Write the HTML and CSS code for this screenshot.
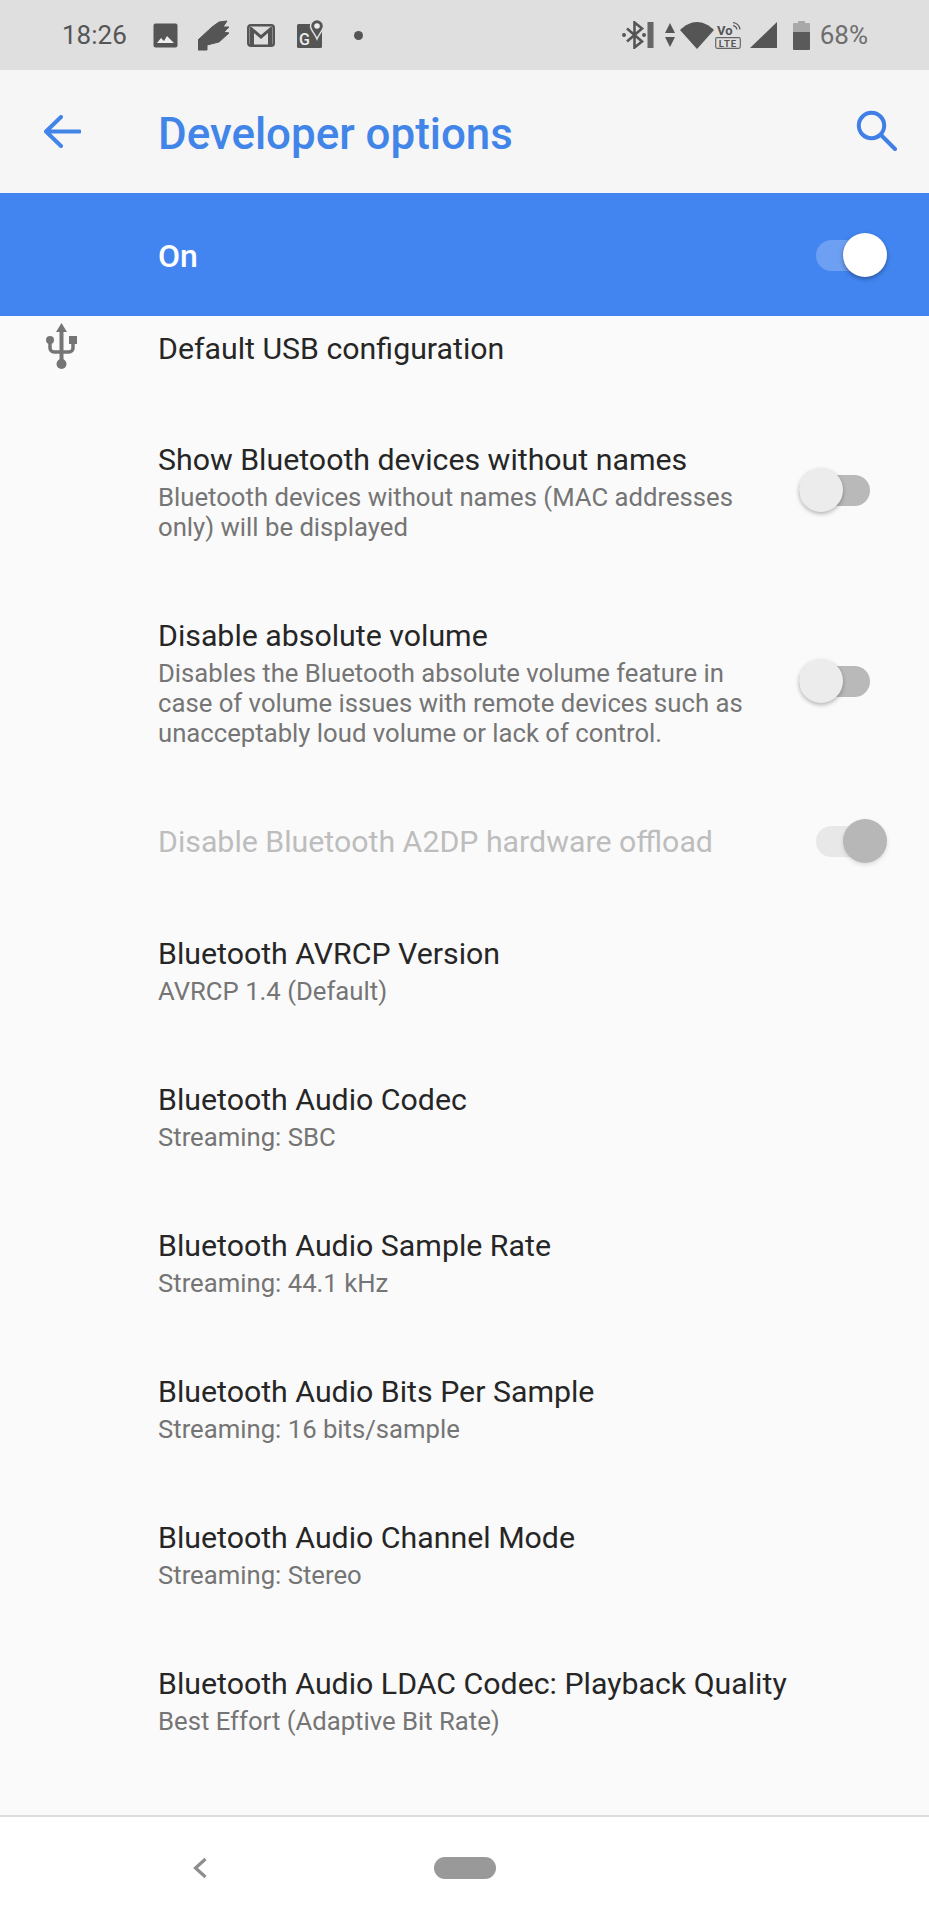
FILE: index.html
```html
<!DOCTYPE html>
<html lang="en">
<head>
<meta charset="utf-8">
<title>Developer options</title>
<link rel="stylesheet" href="styles.css">
</head>
<body>
<div class="phone">
  <header class="status">
    <div class="status-left">
      <span class="time">18:26</span>
      <svg class="ic ic-photo" width="25" height="25" viewBox="0 0 25 25"><rect x="0.5" y="0.5" width="24" height="24" rx="2" fill="#555"/><path d="M4 20l4-5 3 3 3-5 7 7z" fill="#eee"/></svg>
      <svg class="ic ic-wing" width="31" height="31" viewBox="0 0 31 31"><path d="M0 30V20L14 7 21 2 29 1 25 7 31 7 26 12 31 13 21 22 9 25V30z" fill="#555" stroke="#555" stroke-linejoin="round"/></svg>
      <svg class="ic ic-mail" width="28" height="23" viewBox="0 0 28 23"><rect x="1.3" y="1.3" width="25.4" height="20.400" rx="2.5" fill="none" stroke="#555" stroke-width="2.600"/><path d="M3 22V3h1.500L14 11l9.500-8H25v19h-4V9l-7 6-7-6v13z" fill="#555"/></svg>
      <svg class="ic ic-maps" width="27" height="29" viewBox="0 0 27 29"><rect x="0" y="5" width="25" height="24" rx="1.500" fill="#555"/><path d="M20 .5a6.500 6.500 0 0 1 6.500 6.500c0 4-4 7-6.500 13-2.500-6-6.500-9-6.500-13A6.500 6.500 0 0 1 20 .5z" fill="#555" stroke="#dfdfdf" stroke-width="1.500"/><circle cx="20" cy="7" r="2.800" fill="#eee"/><text x="2" y="26" class="maps-g">G</text></svg>
      <span class="dot"></span>
    </div>
    <div class="status-right">
      <svg class="ic" width="33" height="28" viewBox="0 0 33 28"><path d="M5 7.500l15 13-7.500 6V1.500l7.500 6-15 13" fill="none" stroke="#555" stroke-width="2.600"/><circle cx="2" cy="14" r="2" fill="#555"/><circle cx="22" cy="14" r="2" fill="#555"/><rect x="25.500" y="1" width="6" height="26" fill="#666"/></svg>
      <svg class="ic ic-arrows" width="10" height="24" viewBox="0 0 10 24"><path d="M5 0l5 10H0zM5 24L0 14h10z" fill="#555"/></svg>
      <svg class="ic ic-wifi" width="34" height="27" viewBox="0 0 34 27"><path d="M0 8C5 3 11 0 17 0s12 3 17 8L17 27z" fill="#555"/></svg>
      <svg class="ic ic-volte" width="26" height="27" viewBox="0 0 26 27"><text x="2" y="12.500" class="vo">Vo</text><path d="M18 3.500a5 5 0 0 1 4 4M18 0.500a8.500 8.500 0 0 1 7 7" fill="none" stroke="#555" stroke-width="1.200"/><rect x="0.700" y="15.700" width="24.600" height="10.600" rx="1.500" fill="none" stroke="#666" stroke-width="1.200"/><text x="13" y="24.500" class="lte">LTE</text></svg>
      <svg class="ic ic-signal" width="27" height="26" viewBox="0 0 27 26"><path d="M0 26L27 0v26z" fill="#555"/></svg>
      <svg class="ic ic-batt" width="17" height="29" viewBox="0 0 17 29"><path d="M5 0h7v2h4a1 1 0 0 1 1 1v9H0V3a1 1 0 0 1 1-1h4z" fill="#a8a8a8"/><path d="M0 11h17v17a1 1 0 0 1-1 1H1a1 1 0 0 1-1-1z" fill="#5a5a5a"/></svg>
      <span class="pct">68%</span>
    </div>
  </header>

  <div class="appbar">
    <svg class="back" width="37" height="33" viewBox="0 0 37 33"><path d="M17 2L2 16.500 17 31M3 16.500h32.500" fill="none" stroke="#4285e8" stroke-width="4" stroke-linecap="round" stroke-linejoin="round"/></svg>
    <h1 class="title">Developer options</h1>
    <svg class="search" width="41" height="41" viewBox="0 0 41 41"><circle cx="15.500" cy="15.500" r="12.700" fill="none" stroke="#3f7fe6" stroke-width="4"/><path d="M25 25l14 14" stroke="#3f7fe6" stroke-width="4" stroke-linecap="round"/></svg>
  </div>

  <div class="master">
    <span class="master-label">On</span>
    <span class="toggle toggle-on"><span class="track"></span><span class="thumb"></span></span>
  </div>

  <main class="list">
    <div class="row row-usb">
      <svg class="usb" width="31" height="46" viewBox="0 0 31 46"><path d="M15.500 0L21 9H10z" fill="#757575"/><path d="M15.500 8v30" stroke="#757575" stroke-width="4"/><circle cx="4" cy="17" r="4" fill="#757575"/><rect x="23" y="13" width="8" height="8" fill="#757575"/><path d="M4 18v7a4 4 0 0 0 4 4h15a4 4 0 0 0 4-4v-5" fill="none" stroke="#757575" stroke-width="3.500"/><circle cx="15.500" cy="41" r="5" fill="#757575"/></svg>
      <div class="text"><div class="t">Default USB configuration</div></div>
    </div>
    <div class="row">
      <div class="text"><div class="t">Show Bluetooth devices without names</div><div class="s">Bluetooth devices without names (MAC addresses only) will be displayed</div></div>
      <span class="toggle toggle-off"><span class="track"></span><span class="thumb"></span></span>
    </div>
    <div class="row">
      <div class="text"><div class="t">Disable absolute volume</div><div class="s">Disables the Bluetooth absolute volume feature in case of volume issues with remote devices such as unacceptably loud volume or lack of control.</div></div>
      <span class="toggle toggle-off"><span class="track"></span><span class="thumb"></span></span>
    </div>
    <div class="row row-single">
      <div class="text"><div class="t t-disabled">Disable Bluetooth A2DP hardware offload</div></div>
      <span class="toggle toggle-dis"><span class="track"></span><span class="thumb"></span></span>
    </div>
    <div class="row"><div class="text"><div class="t">Bluetooth AVRCP Version</div><div class="s">AVRCP 1.4 (Default)</div></div></div>
    <div class="row"><div class="text"><div class="t">Bluetooth Audio Codec</div><div class="s">Streaming: SBC</div></div></div>
    <div class="row"><div class="text"><div class="t">Bluetooth Audio Sample Rate</div><div class="s">Streaming: 44.1 kHz</div></div></div>
    <div class="row"><div class="text"><div class="t">Bluetooth Audio Bits Per Sample</div><div class="s">Streaming: 16 bits/sample</div></div></div>
    <div class="row"><div class="text"><div class="t">Bluetooth Audio Channel Mode</div><div class="s">Streaming: Stereo</div></div></div>
    <div class="row"><div class="text"><div class="t">Bluetooth Audio LDAC Codec: Playback Quality</div><div class="s">Best Effort (Adaptive Bit Rate)</div></div></div>
  </main>

  <nav class="nav">
    <svg class="nav-back" width="16" height="22" viewBox="0 0 16 22"><path d="M13.500 2L3.500 11l10 9" fill="none" stroke="#8e8e8e" stroke-width="3.200"/></svg>
    <span class="pill"></span>
  </nav>
</div>
</body>
</html>
```

FILE: styles.css
```css
* { box-sizing: border-box; }
html, body { margin: 0; padding: 0; }
body { font-family: Roboto, "Liberation Sans", sans-serif; background: #fafafa; }
.phone { width: 929px; height: 1920px; display: flex; flex-direction: column; overflow: hidden; }
.ic { display: block; flex: none; }

.status { height: 70px; flex: none; background: #dfdfdf; display: flex; justify-content: space-between; align-items: center; }
.status-left { display: flex; align-items: center; padding-left: 62px; }
.status-right { display: flex; align-items: center; padding-right: 61px; }
.time { font-size: 26px; color: #555; width: 64px; }
.ic-photo { margin-left: 27px; }
.ic-wing { margin-left: 20px; }
.ic-mail { margin-left: 18px; }
.ic-maps { margin-left: 22px; margin-top: -4px; }
.dot { width: 9px; height: 9px; border-radius: 50%; background: #555; margin-left: 30px; }
.maps-g { font: 500 16px Roboto, sans-serif; fill: #eee; }
.ic-arrows { margin-left: 10px; }
.ic-wifi { margin-left: 5px; }
.ic-volte { margin-left: 1px; }
.ic-signal { margin-left: 9px; }
.ic-batt { margin-left: 16px; }
.vo { font: 700 13px Roboto, sans-serif; fill: #555; }
.lte { font: 700 9.500px Roboto, sans-serif; fill: #555; text-anchor: middle; letter-spacing: 1px; }
.pct { font-size: 26px; color: #6e6e6e; margin-left: 10px; }

.appbar { height: 123px; flex: none; background: #f6f6f6; display: flex; align-items: center; padding-left: 44px; padding-right: 32px; }
.back { flex: none; }
.title { margin: 5px 0 0 77px; flex: 1; font-size: 43.900px; font-weight: 500; color: #4285e8; }
.search { flex: none; margin-top: -3px; }

.master { height: 123px; flex: none; background: #4285f0; display: flex; align-items: center; justify-content: space-between; padding-left: 158px; }
.master-label { font-size: 32px; font-weight: 500; color: #fff; margin-top: 3px; }

.toggle { position: relative; display: block; flex: none; width: 71px; height: 44px; }
.track { position: absolute; left: 0; right: 0; top: 7px; height: 31px; border-radius: 16px; }
.thumb { position: absolute; top: 0; width: 44px; height: 44px; border-radius: 50%; }
.toggle-on { margin-right: 42px; }
.toggle-on .track { background: #6d9ff3; }
.toggle-on .thumb { right: 0; background: #fff; box-shadow: 0 2px 4px rgba(0, 0, 0, .35); }
.toggle-off { margin-right: 59px; margin-top: -4px; }
.toggle-off .track { background: #b9b9b9; }
.toggle-off .thumb { left: 0; background: #ececec; box-shadow: 0 2px 4px rgba(0, 0, 0, .28); }
.toggle-dis { margin-right: 42px; }
.toggle-dis .track { background: #e8e8e8; }
.toggle-dis .thumb { right: 0; background: #b7b7b7; box-shadow: 0 2px 4px rgba(0, 0, 0, .12); }

.list { flex: 1; min-height: 0; overflow: hidden; background: #fafafa; }
.row { display: flex; align-items: center; justify-content: space-between; padding: 38px 0 37px 158px; }
.row-usb { position: relative; padding-top: 14px; padding-bottom: 36px; }
.usb { position: absolute; left: 46px; top: 7px; }
.row-single { padding-top: 34px; padding-bottom: 34px; }
.text { flex: 1; min-width: 0; }
.t { font-size: 30.300px; line-height: 37px; color: #262626; white-space: nowrap; }
.t-disabled { color: #bdbdbd; }
.s { font-size: 25.700px; line-height: 30px; margin-top: 4px; color: #757575; max-width: 600px; }

.nav { height: 105px; flex: none; background: #fff; border-top: 2px solid #ddd; display: flex; align-items: center; padding: 0 0 0 192px; }
.nav-back { flex: none; margin-top: -2px; }
.pill { width: 62px; height: 22px; border-radius: 11px; background: #999; margin-left: 226px; margin-top: -2px; }
```
